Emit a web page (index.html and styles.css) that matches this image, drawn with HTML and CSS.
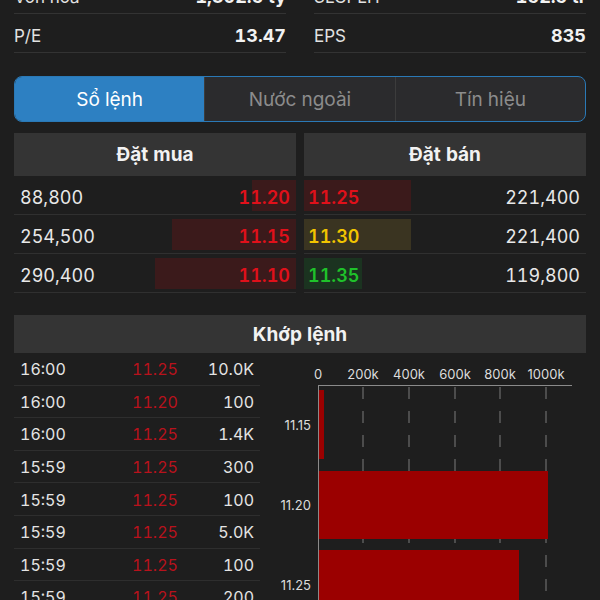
FILE: index.html
```html
<!DOCTYPE html>
<html lang="vi">
<head>
    <meta charset="UTF-8">
    <meta name="viewport" content="width=device-width, initial-scale=1.0">
    <title>Sổ lệnh</title>
    <link rel="stylesheet" href="styles.css">
</head>
<body>
    <div class="page">
        <div class="stats">
            <div class="stat"><span class="stat-label">Vốn hóa</span><span class="stat-value">1,302.5 tỷ</span></div>
            <div class="stat"><span class="stat-label">SLCPLH</span><span class="stat-value">152.5 tr</span></div>
            <div class="stat"><span class="stat-label">P/E</span><span class="stat-value">13.47</span></div>
            <div class="stat"><span class="stat-label">EPS</span><span class="stat-value">835</span></div>
        </div>

        <div class="tabs">
            <div class="tab active">Sổ lệnh</div>
            <div class="tab">Nước ngoài</div>
            <div class="tab">Tín hiệu</div>
        </div>

        <div class="book">
            <div class="book-side bid">
                <div class="section-head">Đặt mua</div>
                <div class="book-row">
                    <span class="depth depth-red" style="width:44px"></span>
                    <span class="qty">88,800</span>
                    <span class="price red">11.20</span>
                </div>
                <div class="book-row">
                    <span class="depth depth-red" style="width:124px"></span>
                    <span class="qty">254,500</span>
                    <span class="price red">11.15</span>
                </div>
                <div class="book-row">
                    <span class="depth depth-red" style="width:141px"></span>
                    <span class="qty">290,400</span>
                    <span class="price red">11.10</span>
                </div>
            </div>
            <div class="book-side ask">
                <div class="section-head">Đặt bán</div>
                <div class="book-row">
                    <span class="depth depth-red" style="width:107px"></span>
                    <span class="price red">11.25</span>
                    <span class="qty">221,400</span>
                </div>
                <div class="book-row">
                    <span class="depth depth-yellow" style="width:107px"></span>
                    <span class="price yellow">11.30</span>
                    <span class="qty">221,400</span>
                </div>
                <div class="book-row">
                    <span class="depth depth-green" style="width:58px"></span>
                    <span class="price green">11.35</span>
                    <span class="qty">119,800</span>
                </div>
            </div>
        </div>

        <div class="section-head matched-head">Khớp lệnh</div>

        <div class="matched">
            <div class="trades">
                <div class="trade"><span>16:00</span><span class="trade-price">11.25</span><span class="trade-qty">10.0K</span></div>
                <div class="trade"><span>16:00</span><span class="trade-price">11.20</span><span class="trade-qty">100</span></div>
                <div class="trade"><span>16:00</span><span class="trade-price">11.25</span><span class="trade-qty">1.4K</span></div>
                <div class="trade"><span>15:59</span><span class="trade-price">11.25</span><span class="trade-qty">300</span></div>
                <div class="trade"><span>15:59</span><span class="trade-price">11.25</span><span class="trade-qty">100</span></div>
                <div class="trade"><span>15:59</span><span class="trade-price">11.25</span><span class="trade-qty">5.0K</span></div>
                <div class="trade"><span>15:59</span><span class="trade-price">11.25</span><span class="trade-qty">100</span></div>
                <div class="trade"><span>15:59</span><span class="trade-price">11.25</span><span class="trade-qty">200</span></div>
            </div>

            <!-- volume by price -->
            <svg class="chart" width="318" height="260" viewBox="0 0 318 260">
                <g class="axis-labels">
                    <text x="50" y="25">0</text>
                    <text x="95" y="25">200k</text>
                    <text x="141" y="25">400k</text>
                    <text x="187" y="25">600k</text>
                    <text x="232" y="25">800k</text>
                    <text x="278" y="25">1000k</text>
                </g>
                <g class="grid">
                    <line x1="95" y1="33" x2="95" y2="260"/>
                    <line x1="141" y1="33" x2="141" y2="260"/>
                    <line x1="187" y1="33" x2="187" y2="260"/>
                    <line x1="232" y1="33" x2="232" y2="260"/>
                    <line x1="278" y1="33" x2="278" y2="260"/>
                </g>
                <line class="axis" x1="50" y1="31.5" x2="304" y2="31.5"/>
                <line class="axis" x1="50.5" y1="31" x2="50.5" y2="260"/>
                <g class="bars">
                    <rect x="51" y="36" width="5" height="69"/>
                    <rect x="51" y="117" width="229" height="68"/>
                    <rect x="51" y="196" width="200" height="68"/>
                </g>
                <g class="price-labels">
                    <text x="43" y="76">11.15</text>
                    <text x="43" y="156">11.20</text>
                    <text x="43" y="236">11.25</text>
                </g>
            </svg>
        </div>
    </div>
</body>
</html>
```

FILE: styles.css
```css
html, body {
    margin: 0;
    height: 100%;
    overflow: hidden;
}
body {
    font-family: Inter, "Noto Sans", sans-serif;
    font-variant-numeric: tabular-nums;
    background-color: #1e1e1e;
    color: #e6e6e6;
}
.page {
    display: flow-root;
    padding: 0 14px;
}

/* stats */
.stats {
    display: grid;
    grid-template-columns: 1fr 1fr;
    column-gap: 28px;
    margin-top: -25px;
}
.stat {
    display: flex;
    justify-content: space-between;
    align-items: center;
    height: 39px;
    padding-top: 5px;
    box-sizing: border-box;
    border-bottom: 1px solid #333;
}
.stat-label {
    font-size: 17px;
    color: #e2e2e2;
}
.stat-value {
    font-size: 18px;
    font-weight: 700;
    color: #f2f2f2;
}

/* tabs */
.tabs {
    display: flex;
    height: 46px;
    margin-top: 23px;
    border: 1.5px solid #2a79b6;
    border-radius: 8px;
    overflow: hidden;
    box-sizing: border-box;
    background-color: #2b2b2d;
}
.tab {
    flex: 1;
    display: flex;
    align-items: center;
    justify-content: center;
    font-size: 19px;
    color: #8c8c8c;
    border-left: 1px solid #3c3c3c;
}
.tab:first-child {
    border-left: none;
}
.tab.active {
    background-color: #2d80c2;
    color: #fff;
}

/* order book */
.section-head {
    display: flex;
    align-items: center;
    justify-content: center;
    height: 43px;
    background-color: #343434;
    font-size: 19px;
    font-weight: 700;
    color: #f2f2f2;
}
.book {
    display: grid;
    grid-template-columns: 1fr 1fr;
    column-gap: 8px;
    margin-top: 11px;
}
.book-row {
    position: relative;
    display: flex;
    justify-content: space-between;
    align-items: center;
    height: 39px;
    box-sizing: border-box;
    padding-top: 5px;
    border-bottom: 1px solid #303030;
    font-size: 18px;
}
.bid .book-row {
    padding-left: 6px;
    padding-right: 6px;
}
.ask .book-row {
    padding-left: 4px;
    padding-right: 6px;
}
.depth {
    position: absolute;
    top: 4px;
    bottom: 3px;
}
.bid .depth {
    right: 0;
}
.ask .depth {
    left: 0;
}
.depth-red {
    background-color: #3b1a1b;
}
.depth-yellow {
    background-color: #3a3421;
}
.depth-green {
    background-color: #1b3320;
}
.qty, .price {
    position: relative;
}
.qty {
    color: #e8e8e8;
}
.price {
    font-weight: 600;
}
.red {
    color: #e0101a;
}
.yellow {
    color: #f2c500;
}
.green {
    color: #1fc22a;
}

/* matched orders */
.matched-head {
    height: 38px;
    margin-top: 22px;
}
.matched {
    display: grid;
    grid-template-columns: 246px 318px;
    column-gap: 8px;
}
.trade {
    display: grid;
    grid-template-columns: 110px 50px 1fr;
    align-items: center;
    height: 32.6px;
    box-sizing: border-box;
    padding: 1px 6px 0;
    border-bottom: 1px solid #2e2e2e;
    font-size: 16px;
    color: #e4e4e4;
}
.trade-price {
    text-align: center;
    color: #b8121c;
}
.trade-qty {
    text-align: right;
}

/* chart */
.chart {
    display: block;
    margin-top: 1px;
}
.chart text {
    font-family: Inter, "Noto Sans", sans-serif;
    font-variant-numeric: normal;
    font-size: 13px;
    fill: #dcdcdc;
}
.axis-labels text {
    text-anchor: middle;
}
.price-labels text {
    text-anchor: end;
}
.grid line {
    stroke: #7a7a7a;
    stroke-width: 1;
    stroke-dasharray: 12 12;
}
.axis {
    stroke: #8a8a8a;
    stroke-width: 1;
}
.bars rect {
    fill: #9b0000;
}
```
